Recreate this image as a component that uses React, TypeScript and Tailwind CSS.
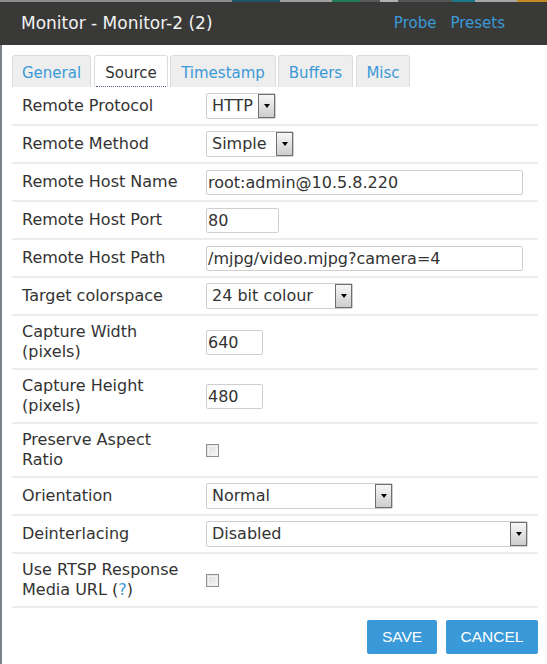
import React from 'react';

const font = "font-['DejaVu_Sans',Verdana,sans-serif]";

const Select = ({ value, w }: { value: string; w: string }) => (
  <div className={`${w} h-[26px] flex items-stretch border border-[#cfcfcf] rounded-[2px] bg-white`}>
    <span className="flex-1 pl-[5px] text-[16px] leading-[24px] text-[#333] whitespace-nowrap overflow-hidden">{value}</span>
    <span className="w-[17px] my-[0px] mr-0 border border-[#6f6f6f] bg-gradient-to-b from-[#f7f7f7] to-[#cdcdcd] flex items-center justify-center">
      <span className="w-0 h-0 border-l-[3px] border-r-[3px] border-t-[4px] border-l-transparent border-r-transparent border-t-black" />
    </span>
  </div>
);

const TextInput = ({ value, w }: { value: string; w: string }) => (
  <div className={`${w} h-[25px] border border-[#cfcfcf] rounded-[2px] bg-white pl-[1px] text-[16px] leading-[23px] text-[#333] whitespace-nowrap overflow-hidden`}>
    {value}
  </div>
);

const Checkbox = () => (
  <div className="w-[13px] h-[13px] border border-[#8e8f8f] bg-gradient-to-br from-[#dcdcdc] to-[#f6f6f6] p-[1px]">
    <div className="w-full h-full border border-[#f4f4f4]" />
  </div>
);

const Row = ({ label, children }: { label: React.ReactNode; children: React.ReactNode }) => (
  <div className="flex items-center min-h-[38px] border-b-2 border-[#ededed] pl-[10px]">
    <div className="w-[184px] py-[6px] text-[16px] leading-[20px] text-[#333]">{label}</div>
    <div className="flex-1 py-[5px]">{children}</div>
  </div>
);

const tabs = [
  { name: 'General', w: 'w-[79px]' },
  { name: 'Source', w: 'w-[74px]', active: true },
  { name: 'Timestamp', w: 'w-[106px]' },
  { name: 'Buffers', w: 'w-[75px]' },
  { name: 'Misc', w: 'w-[54px]' },
];

const strip = [
  ['w-[232px]', 'bg-[#8c8c8c]'],
  ['w-[48px]', 'bg-[#1e5568]'],
  ['w-[52px]', 'bg-[#a0a0a0]'],
  ['w-[28px]', 'bg-[#1f7a55]'],
  ['w-[20px]', 'bg-[#5a5a5a]'],
  ['w-[18px]', 'bg-[#b0b0b0]'],
  ['w-[54px]', 'bg-[#555555]'],
  ['w-[23px]', 'bg-[#1a7a8a]'],
  ['w-[42px]', 'bg-[#a5a5a5]'],
  ['w-[30px]', 'bg-[#c48a1f]'],
];

export default function App() {
  return (
    <div className={`w-[547px] h-[664px] bg-white overflow-hidden flex flex-col ${font}`}>
      <div className="flex h-[2px] shrink-0">
        {strip.map(([w, c], i) => (
          <div key={i} className={`${w} ${c} h-full`} />
        ))}
      </div>
      <div className="h-[43px] shrink-0 bg-[#393937] flex items-center justify-between pl-[21px] pr-[42px]">
        <span className="text-[17px] text-[#f2f2f2] leading-none">Monitor - Monitor-2 (2)</span>
        <div className="flex gap-[14px] text-[15px] text-[#3b99d8] leading-none">
          <span>Probe</span>
          <span>Presets</span>
        </div>
      </div>
      <div className="flex-1 border-l-2 border-[#7b8188] pl-[10px] pr-[9px]">
        <div className="flex mt-[10px] h-[32px]">
          {tabs.map((t, i) => (
            <div
              key={t.name}
              className={`${t.w} ${i === 1 ? 'ml-[3px]' : i === 4 ? 'ml-[3px]' : i > 0 ? 'ml-[2px]' : ''} h-full border border-b-0 rounded-t-[3px] text-center text-[15px] leading-[20px] pt-[7px] ${
                t.active
                  ? 'bg-white border-[#dcdcdc] text-[#333] relative'
                  : 'bg-[#eeeeee] border-[#dcdcdc] text-[#3b99d8]'
              }`}
            >
              {t.name}
              {t.active && (
                <span className="absolute left-[1px] right-[1px] bottom-0 border-b border-dotted border-[#5a5a8a]" />
              )}
            </div>
          ))}
        </div>
        <div className="mt-[1px]">
          <Row label="Remote Protocol">
            <Select value="HTTP" w="w-[70px]" />
          </Row>
          <Row label="Remote Method">
            <Select value="Simple" w="w-[88px]" />
          </Row>
          <Row label="Remote Host Name">
            <TextInput value="root:admin@10.5.8.220" w="w-[317px]" />
          </Row>
          <Row label="Remote Host Port">
            <TextInput value="80" w="w-[73px]" />
          </Row>
          <Row label="Remote Host Path">
            <TextInput value="/mjpg/video.mjpg?camera=4" w="w-[317px]" />
          </Row>
          <Row label="Target colorspace">
            <Select value="24 bit colour" w="w-[147px]" />
          </Row>
          <Row label={<>Capture Width<br />(pixels)</>}>
            <TextInput value="640" w="w-[57px]" />
          </Row>
          <Row label={<>Capture Height<br />(pixels)</>}>
            <TextInput value="480" w="w-[57px]" />
          </Row>
          <Row label={<>Preserve Aspect<br />Ratio</>}>
            <Checkbox />
          </Row>
          <Row label="Orientation">
            <Select value="Normal" w="w-[187px]" />
          </Row>
          <Row label="Deinterlacing">
            <Select value="Disabled" w="w-[322px]" />
          </Row>
          <Row
            label={
              <>
                Use RTSP Response
                <br />
                Media URL (<span className="text-[#3b99d8]">?</span>)
              </>
            }
          >
            <Checkbox />
          </Row>
        </div>
        <div className="flex justify-end gap-[9px] mt-[12px] font-['Liberation_Sans',Arial,sans-serif]">
          <button className="w-[70px] h-[34px] bg-[#3a99d8] text-white text-[15.5px] rounded-[2px]">SAVE</button>
          <button className="w-[92px] h-[34px] bg-[#3a99d8] text-white text-[15.5px] rounded-[2px]">CANCEL</button>
        </div>
      </div>
    </div>
  );
}
